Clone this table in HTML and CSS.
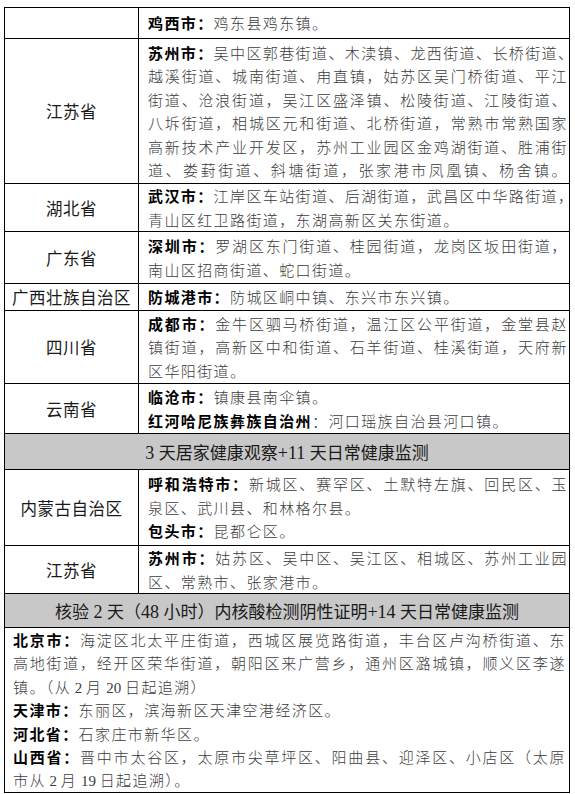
FILE: index.html
```html
<!DOCTYPE html>
<html lang="zh-CN">
<head>
<meta charset="utf-8">
<title>风险地区健康管理</title>
<link rel="stylesheet" href="styles.css">
</head>
<body>
<table class="sheet">
  <colgroup><col class="c1"><col class="c2"></colgroup>
  <tr class="r-jixi">
    <td class="prov"></td>
    <td class="txt"><div class="ln"><b>鸡西市：</b>鸡东县鸡东镇。</div></td>
  </tr>
  <tr class="r-sz">
    <td class="prov">江苏省</td>
    <td class="txt">
      <div class="ln full"><b>苏州市：</b>吴中区郭巷街道、木渎镇、龙西街道、长桥街道、</div>
      <div class="ln full">越溪街道、城南街道、甪直镇，姑苏区吴门桥街道、平江</div>
      <div class="ln full">街道、沧浪街道，吴江区盛泽镇、松陵街道、江陵街道、</div>
      <div class="ln full">八坼街道，相城区元和街道、北桥街道，常熟市常熟国家</div>
      <div class="ln full">高新技术产业开发区，苏州工业园区金鸡湖街道、胜浦街</div>
      <div class="ln full">道、娄葑街道、斜塘街道，张家港市凤凰镇、杨舍镇。</div>
    </td>
  </tr>
  <tr class="r-hb">
    <td class="prov">湖北省</td>
    <td class="txt">
      <div class="ln full"><b>武汉市：</b>江岸区车站街道、后湖街道，武昌区中华路街道，</div>
      <div class="ln">青山区红卫路街道，东湖高新区关东街道。</div>
    </td>
  </tr>
  <tr class="r-gd">
    <td class="prov">广东省</td>
    <td class="txt">
      <div class="ln full"><b>深圳市：</b>罗湖区东门街道、桂园街道，龙岗区坂田街道，</div>
      <div class="ln">南山区招商街道、蛇口街道。</div>
    </td>
  </tr>
  <tr class="r-gx">
    <td class="prov">广西壮族自治区</td>
    <td class="txt"><div class="ln"><b>防城港市：</b>防城区峒中镇、东兴市东兴镇。</div></td>
  </tr>
  <tr class="r-sc">
    <td class="prov">四川省</td>
    <td class="txt">
      <div class="ln full"><b>成都市：</b>金牛区驷马桥街道，温江区公平街道，金堂县赵</div>
      <div class="ln full">镇街道，高新区中和街道、石羊街道、桂溪街道，天府新</div>
      <div class="ln">区华阳街道。</div>
    </td>
  </tr>
  <tr class="r-yn">
    <td class="prov">云南省</td>
    <td class="txt">
      <div class="ln"><b>临沧市：</b>镇康县南伞镇。</div>
      <div class="ln"><b>红河哈尼族彝族自治州</b>：河口瑶族自治县河口镇。</div>
    </td>
  </tr>
  <tr class="hdr r-h1">
    <td colspan="2"><span class="num">3 </span>天居家健康观察<span class="num">+11 </span>天日常健康监测</td>
  </tr>
  <tr class="r-nm">
    <td class="prov">内蒙古自治区</td>
    <td class="txt">
      <div class="ln full"><b>呼和浩特市：</b>新城区、赛罕区、土默特左旗、回民区、玉</div>
      <div class="ln">泉区、武川县、和林格尔县。</div>
      <div class="ln"><b>包头市：</b>昆都仑区。</div>
    </td>
  </tr>
  <tr class="r-js">
    <td class="prov">江苏省</td>
    <td class="txt">
      <div class="ln full"><b>苏州市：</b>姑苏区、吴中区、吴江区、相城区、苏州工业园</div>
      <div class="ln">区、常熟市、张家港市。</div>
    </td>
  </tr>
  <tr class="hdr r-h2">
    <td colspan="2">核验<span class="num"> 2 </span>天（<span class="num">48 </span>小时）内核酸检测阴性证明<span class="num">+14 </span>天日常健康监测</td>
  </tr>
  <tr class="r-bj">
    <td colspan="2" class="txt wide">
      <div class="ln full"><b>北京市：</b>海淀区北太平庄街道，西城区展览路街道，丰台区卢沟桥街道、东</div>
      <div class="ln full">高地街道，经开区荣华街道，朝阳区来广营乡，通州区潞城镇，顺义区李遂</div>
      <div class="ln">镇。（从<span class="num"> 2 </span>月<span class="num"> 20 </span>日起追溯）</div>
      <div class="ln"><b>天津市：</b>东丽区，滨海新区天津空港经济区。</div>
      <div class="ln"><b>河北省：</b>石家庄市新华区。</div>
      <div class="ln full"><b>山西省：</b>晋中市太谷区，太原市尖草坪区、阳曲县、迎泽区、小店区（太原</div>
      <div class="ln">市从<span class="num"> 2 </span>月<span class="num"> 19 </span>日起追溯）。</div>
    </td>
  </tr>
</table>
</body>
</html>
```

FILE: styles.css
```css
html, body {
  margin: 0;
  padding: 0;
  background: #ffffff;
}

.sheet {
  border-collapse: collapse;
  table-layout: fixed;
  width: 566px;
  margin: 7px 0 0 4px;
}

.c1 { width: 134px; }

.sheet td {
  border: 1px solid #000;
  padding: 0;
  vertical-align: middle;
}

.prov {
  text-align: center;
  font-family: "Noto Sans CJK SC", sans-serif;
  font-size: 16.5px;
  letter-spacing: 0.5px;
  color: #1a1a1a;
}

.txt {
  padding: 0 1px 0 9px !important;
  font-family: "Noto Sans CJK SC", sans-serif;
  font-size: 15px;
  font-weight: 300;
  line-height: 23.5px;
  letter-spacing: 1.4px;
  color: #3c3c3c;
}

.txt b {
  font-weight: 700;
  color: #000;
}

.num {
  font-family: "Liberation Serif", serif;
  line-height: 1;
  letter-spacing: 0;
}

.ln {
  white-space: nowrap;
}

.ln.full {
  text-align: justify;
  text-align-last: justify;
}

.hdr td {
  background: #c8c8c8;
  text-align: center;
  font-family: "Noto Sans CJK SC", sans-serif;
  font-size: 17px;
  line-height: 24px;
  color: #1a1a1a;
}

.hdr .num {
  font-size: 18px;
}

.txt.wide {
  padding: 0 3px 0 8px !important;
  line-height: 23.4px;
}

.r-jixi td { height: 30px; }
.r-sz td { height: 144px; }
.r-hb td { height: 46px; }
.r-gd td { height: 51px; }
.r-gx td { height: 26px; }
.r-sc td { height: 72px; }
.r-yn td { height: 49px; }
.r-h1 td { height: 35px; }
.r-nm td { height: 75px; }
.r-js td { height: 46px; }
.r-h2 td { height: 33px; }
.r-bj td { height: 163px; }
```
